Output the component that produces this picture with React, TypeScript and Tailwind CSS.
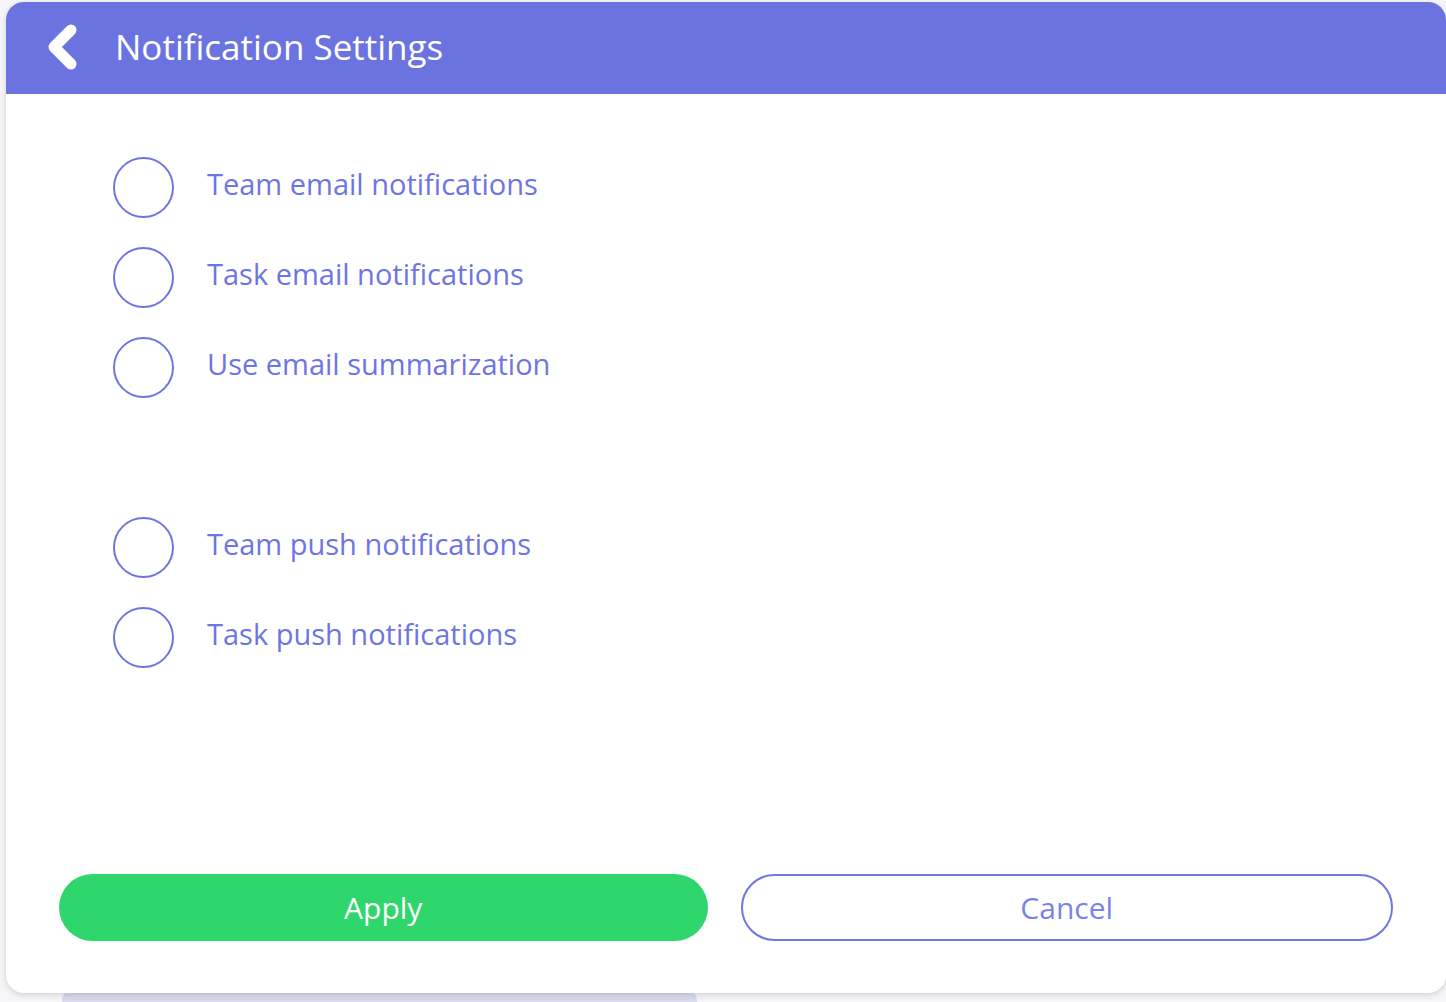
import React from 'react';

const options = [
  ['Team email notifications', 'Task email notifications', 'Use email summarization'],
  ['Team push notifications', 'Task push notifications'],
];

const Radio: React.FC<{ label: string }> = ({ label }) => (
  <div className="flex items-center h-[90px]">
    <div className="w-[61px] h-[61px] rounded-full border-[2.5px] border-[#6e75e2] shrink-0" />
    <span className="ml-[33px] text-[29px] text-[#6e75e2] leading-none -mt-[7px]">{label}</span>
  </div>
);

export default function App() {
  return (
    <div className="w-[1446px] h-[1002px] bg-[#f6f6f8] overflow-hidden relative font-['Open_Sans','Noto_Sans',sans-serif]">
      <div className="ml-[6px] mt-[2px] w-[1440px] h-[991px] bg-white rounded-[18px] shadow-[0_2px_6px_rgba(0,0,0,0.15)] flex flex-col overflow-hidden relative z-10">
        {/* Header */}
        <div className="h-[92px] bg-[#6b73e0] flex items-center shrink-0">
          <svg width="36" height="46" viewBox="0 0 36 46" className="ml-[38px] -mt-[2px]">
            <path d="M27 6 L10 23 L27 40" fill="none" stroke="white" strokeWidth="11" strokeLinecap="round" strokeLinejoin="round" />
          </svg>
          <h1 className="ml-[35px] text-[35px] text-white leading-none -mt-[4px]">Notification Settings</h1>
        </div>

        {/* Options */}
        <div className="pl-[107px] pt-[48px] flex flex-col">
          {options[0].map((o) => (
            <Radio key={o} label={o} />
          ))}
          <div className="h-[90px]" />
          {options[1].map((o) => (
            <Radio key={o} label={o} />
          ))}
        </div>

        <div className="flex-1" />

        {/* Buttons */}
        <div className="flex gap-[33px] pl-[53px] pr-[53px] pb-[52px]">
          <button className="flex-1 h-[67px] rounded-full bg-[#2ed66b] text-white text-[30px] leading-none">
            Apply
          </button>
          <button className="flex-1 h-[67px] rounded-full border-[2.5px] border-[#7077e4] text-[#7b82e8] text-[30px] leading-none">
            Cancel
          </button>
        </div>
      </div>
      <div className="absolute left-[62px] top-[990px] w-[635px] h-[20px] rounded-[10px] bg-[#d8d9ef]" />
    </div>
  );
}
